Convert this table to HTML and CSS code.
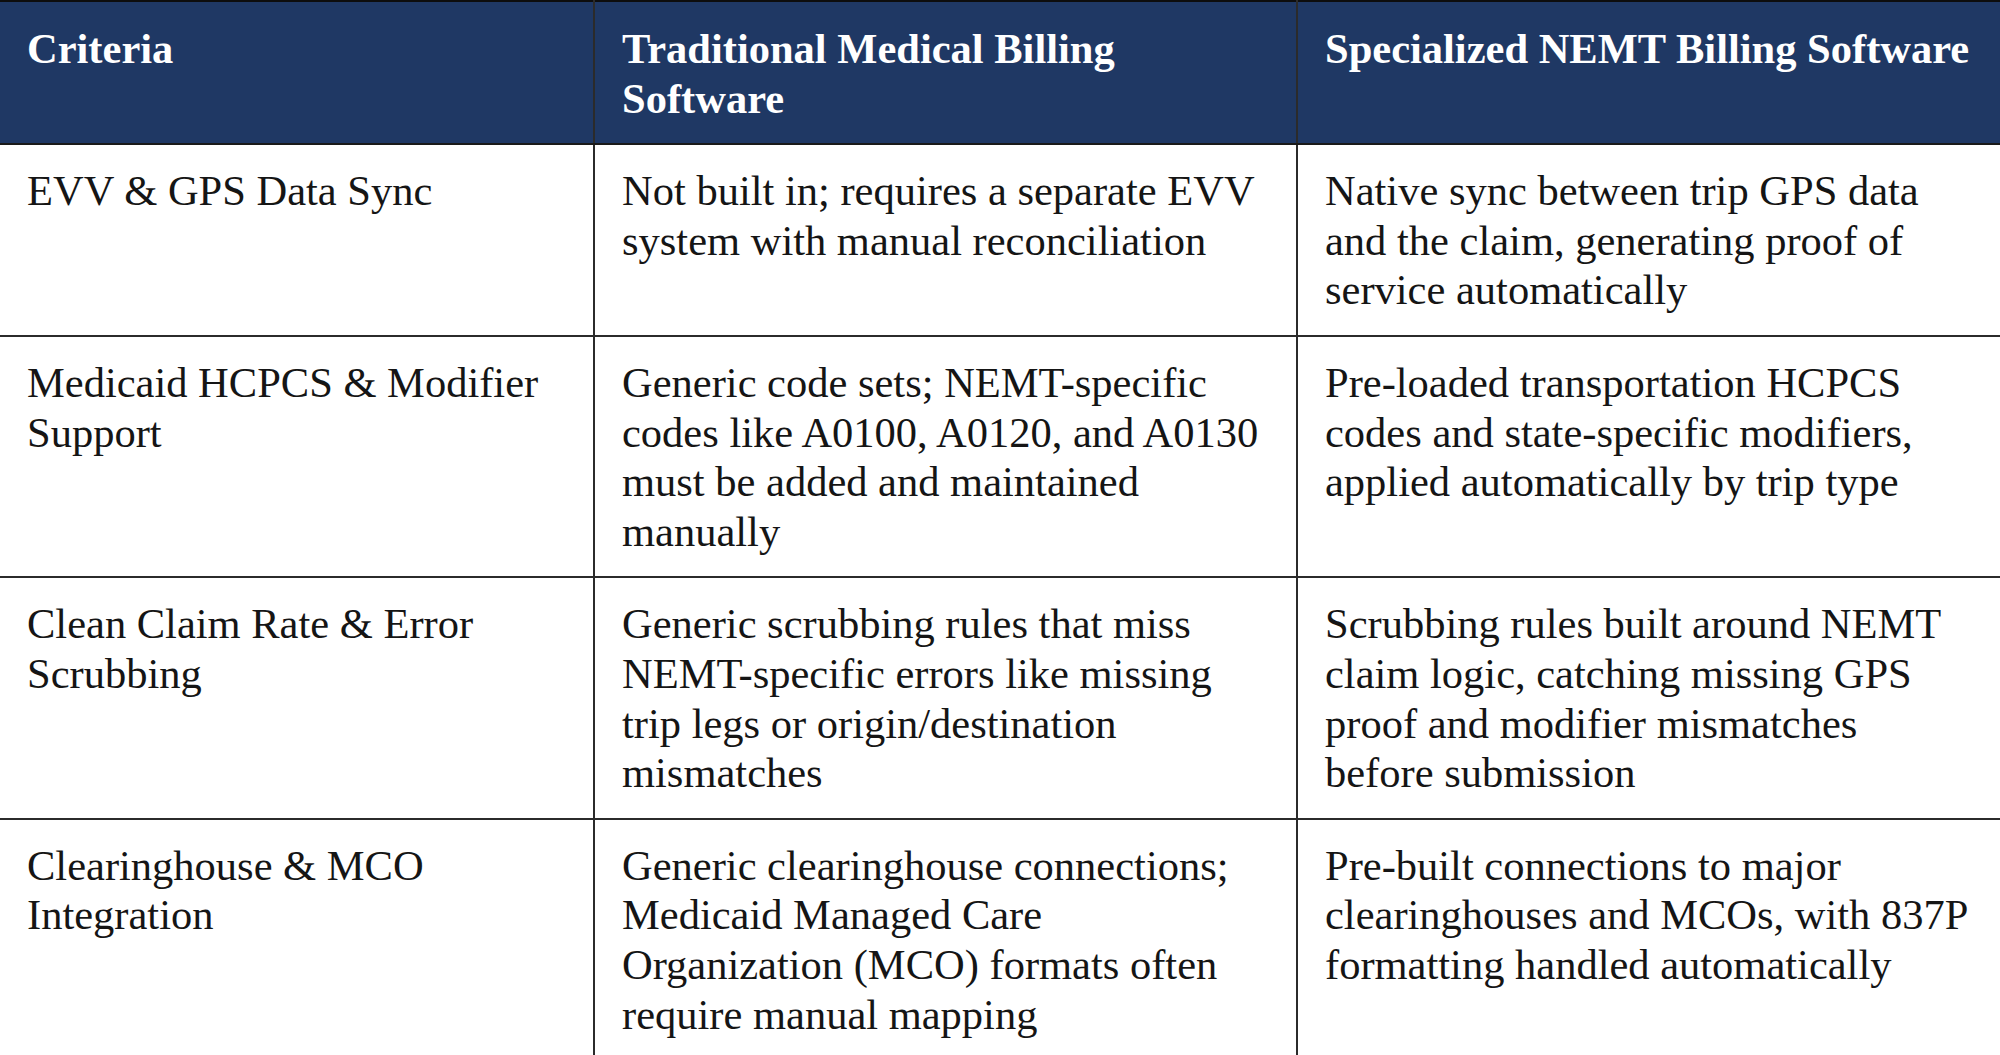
FILE: index.html
```html
<!DOCTYPE html>
<html lang="en">
<head>
<meta charset="utf-8">
<title>Traditional vs Specialized NEMT Billing Software</title>
<link rel="stylesheet" href="styles.css">
</head>
<body>
<table class="cmp">
  <colgroup>
    <col class="c1">
    <col class="c2">
    <col class="c3">
  </colgroup>
  <thead>
    <tr>
      <th>Criteria</th>
      <th>Traditional Medical Billing Software</th>
      <th>Specialized NEMT Billing Software</th>
    </tr>
  </thead>
  <tbody>
    <tr>
      <td>EVV &amp; GPS Data Sync</td>
      <td>Not built in; requires a separate EVV system with manual reconciliation</td>
      <td>Native sync between trip GPS data and the claim, generating proof of service automatically</td>
    </tr>
    <tr>
      <td>Medicaid HCPCS &amp; Modifier Support</td>
      <td>Generic code sets; NEMT-specific codes like A0100, A0120, and A0130 must be added and maintained manually</td>
      <td>Pre-loaded transportation HCPCS codes and state-specific modifiers, applied automatically by trip type</td>
    </tr>
    <tr>
      <td>Clean Claim Rate &amp; Error Scrubbing</td>
      <td>Generic scrubbing rules that miss NEMT-specific errors like missing trip legs or origin/destination mismatches</td>
      <td>Scrubbing rules built around NEMT claim logic, catching missing GPS proof and modifier mismatches before submission</td>
    </tr>
    <tr>
      <td>Clearinghouse &amp; MCO Integration</td>
      <td>Generic clearinghouse connections; Medicaid Managed Care Organization (MCO) formats often require manual mapping</td>
      <td>Pre-built connections to major clearinghouses and MCOs, with 837P formatting handled automatically</td>
    </tr>
  </tbody>
</table>
</body>
</html>
```
FILE: styles.css
```css
html, body {
  margin: 0;
  padding: 0;
  background: #ffffff;
  overflow: hidden;
}

body {
  font-family: "Liberation Serif", "Times New Roman", serif;
  color: #151515;
}

.cmp {
  width: 2000px;
  border-collapse: collapse;
  table-layout: fixed;
}

.cmp .c1 { width: 594px; }
.cmp .c2 { width: 703px; }
.cmp .c3 { width: 703px; }

.cmp th,
.cmp td {
  padding: 21px 27px 20px 27px;
  vertical-align: top;
  text-align: left;
  font-size: 42.5px;
  line-height: 49.6px;
  border: 2px solid #2b2b2b;
}

.cmp th {
  padding-top: 22px;
  background: #1f3864;
  color: #ffffff;
  font-weight: bold;
  border-top: 2px solid #0d0d0d;
  border-bottom: 2px solid #1a1a1a;
}

.cmp td {
  font-weight: normal;
  color: #151515;
}

.cmp tr > :first-child { border-left: none; }
.cmp tr > :last-child { border-right: none; }
```
